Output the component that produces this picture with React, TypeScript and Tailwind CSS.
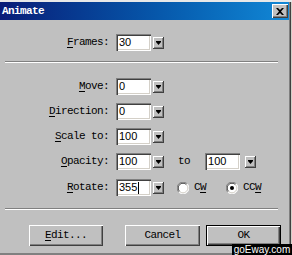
import React from 'react';

const mono = "font-['Liberation_Mono',monospace] text-[11px] tracking-[-0.6px] text-black";

const Spin: React.FC<{ className?: string }> = ({ className = '' }) => (
  <div
    className={`w-[11px] h-[12px] bg-[#c0c0c0] flex items-center justify-center shadow-[inset_-1px_-1px_#404040,inset_1px_1px_#ffffff,inset_-2px_-2px_#808080] ${className}`}
  >
    <svg width="5" height="4" viewBox="0 0 5 4">
      <rect x="0" y="0" width="5" height="1" fill="#000" />
      <polygon points="0,1 5,1 2.5,4" fill="#000" />
    </svg>
  </div>
);

const Field: React.FC<{ value: string; caret?: boolean; className?: string }> = ({ value, caret, className = '' }) => (
  <div
    className={`w-[35px] h-[17px] bg-white flex items-center pl-[3px] shadow-[inset_1px_1px_#808080,inset_2px_2px_#404040,inset_-1px_-1px_#ffffff,inset_-2px_-2px_#d4d0c8] font-['Liberation_Sans',sans-serif] text-[11px] text-black leading-none ${className}`}
  >
    {value}
    {caret && <span className="w-px h-[12px] bg-black ml-px" />}
  </div>
);

const Radio: React.FC<{ checked?: boolean }> = ({ checked }) => (
  <svg width="12" height="12" viewBox="0 0 12 12">
    <circle cx="6" cy="6" r="5.5" fill="#ffffff" />
    <path d="M1.8 10.2 A5.5 5.5 0 0 1 10.2 1.8" stroke="#808080" strokeWidth="1" fill="none" />
    <path d="M2.6 9.4 A4.5 4.5 0 0 1 9.4 2.6" stroke="#404040" strokeWidth="1" fill="none" />
    <path d="M10.2 1.8 A5.5 5.5 0 0 1 1.8 10.2" stroke="#ffffff" strokeWidth="1" fill="none" />
    <path d="M9.4 2.6 A4.5 4.5 0 0 1 2.6 9.4" stroke="#d4d0c8" strokeWidth="1" fill="none" />
    {checked && <circle cx="6" cy="6" r="2" fill="#000" />}
  </svg>
);

const Row: React.FC<{ label: React.ReactNode; children: React.ReactNode; className?: string }> = ({ label, children, className = '' }) => (
  <div className={`flex items-center h-[17px] ${className}`}>
    <div className={`w-[109px] text-right ${mono}`}>{label}</div>
    <div className="ml-[7px] flex items-center">{children}</div>
  </div>
);

const Sep: React.FC<{ className?: string }> = ({ className = '' }) => (
  <div className={`ml-[5px] w-[273px] h-[2px] border-t border-t-[#808080] border-b border-b-white ${className}`} />
);

const Btn: React.FC<{ children: React.ReactNode; primary?: boolean; width?: string; className?: string }> = ({
  children,
  primary,
  width = 'w-[75px]',
  className = ''
}) => (
  <div
    className={`${width} h-[21px] bg-[#c0c0c0] flex items-center justify-center ${mono} ${
      primary
        ? 'shadow-[inset_0_0_0_1px_#000,inset_2px_2px_#ffffff,inset_-2px_-2px_#404040,inset_-3px_-3px_#808080]'
        : 'shadow-[inset_1px_1px_#ffffff,inset_-1px_-1px_#404040,inset_-2px_-2px_#808080]'
    } ${className}`}
  >
    {children}
  </div>
);

export default function App() {
  return (
    <div className="w-[292px] h-[255px] relative overflow-hidden bg-[#c0c0c0] pt-[2px] pr-[3px] flex flex-col shadow-[inset_0_2px_#e8e8e8,inset_-1px_0_#d4d0c8,inset_-2px_0_#404040,inset_-3px_0_#808080,inset_0_-2px_#808080]">
      <div className="h-[18px] flex items-center justify-between bg-linear-to-r from-[#0a1c78] to-[#1288d6] pl-[2px] pr-[1px]">
        <span className="font-['Liberation_Mono',monospace] text-[11px] tracking-[-0.6px] font-bold text-white">Animate</span>
        <div className="w-[16px] h-[14px] bg-[#c0c0c0] flex items-center justify-center shadow-[inset_1px_1px_#ffffff,inset_-1px_-1px_#404040,inset_-2px_-2px_#808080]">
          <svg width="8" height="7" viewBox="0 0 8 7">
            <path d="M0 0 L2 0 L4 2 L6 0 L8 0 L5 3.5 L8 7 L6 7 L4 5 L2 7 L0 7 L3 3.5 Z" fill="#000" />
          </svg>
        </div>
      </div>

      <Row className="mt-[14px]" label={<><u className="underline-offset-2">F</u>rames:</>}>
        <Field value="30" />
        <Spin className="ml-[2px]" />
      </Row>

      <Sep className="mt-[10px]" />

      <div className="mt-[15px] flex flex-col gap-[8px]">
        <Row label={<><u className="underline-offset-2">M</u>ove:</>}>
          <Field value="0" />
          <Spin className="ml-[2px]" />
        </Row>
        <Row label={<><u className="underline-offset-2">D</u>irection:</>}>
          <Field value="0" />
          <Spin className="ml-[2px]" />
        </Row>
        <Row label={<><u className="underline-offset-2">S</u>cale to:</>}>
          <Field value="100" />
          <Spin className="ml-[2px]" />
        </Row>
        <Row label={<><u className="underline-offset-2">O</u>pacity:</>}>
          <Field value="100" />
          <Spin className="ml-[2px]" />
          <span className={`ml-[14px] ${mono}`}>to</span>
          <Field value="100" className="ml-[15px]" />
          <Spin className="ml-[5px]" />
        </Row>
        <Row className="mt-[1px]" label={<><u className="underline-offset-2">R</u>otate:</>}>
          <Field value="355" caret />
          <Spin className="ml-[2px]" />
          <div className="ml-[13px] flex items-center">
            <Radio />
            <span className={`ml-[5px] ${mono}`}>C<u className="underline-offset-2">W</u></span>
          </div>
          <div className="ml-[20px] flex items-center">
            <Radio checked />
            <span className={`ml-[5px] ${mono}`}>CC<u className="underline-offset-2">W</u></span>
          </div>
        </Row>
      </div>

      <Sep className="mt-[12px]" />

      <div className="mt-[15px] pl-[29px] flex items-center">
        <Btn width="w-[74px]"><span><u className="underline-offset-2">E</u>dit...</span></Btn>
        <Btn className="ml-[22px]">Cancel</Btn>
        <Btn primary className="ml-[6px]">OK</Btn>
      </div>

      <div className="absolute right-0 bottom-0 w-[60px] h-[11px] bg-black flex items-center justify-center">
        <span className="font-['Liberation_Sans',sans-serif] text-[10px] leading-none text-white whitespace-nowrap">goEway.com</span>
      </div>
    </div>
  );
}
